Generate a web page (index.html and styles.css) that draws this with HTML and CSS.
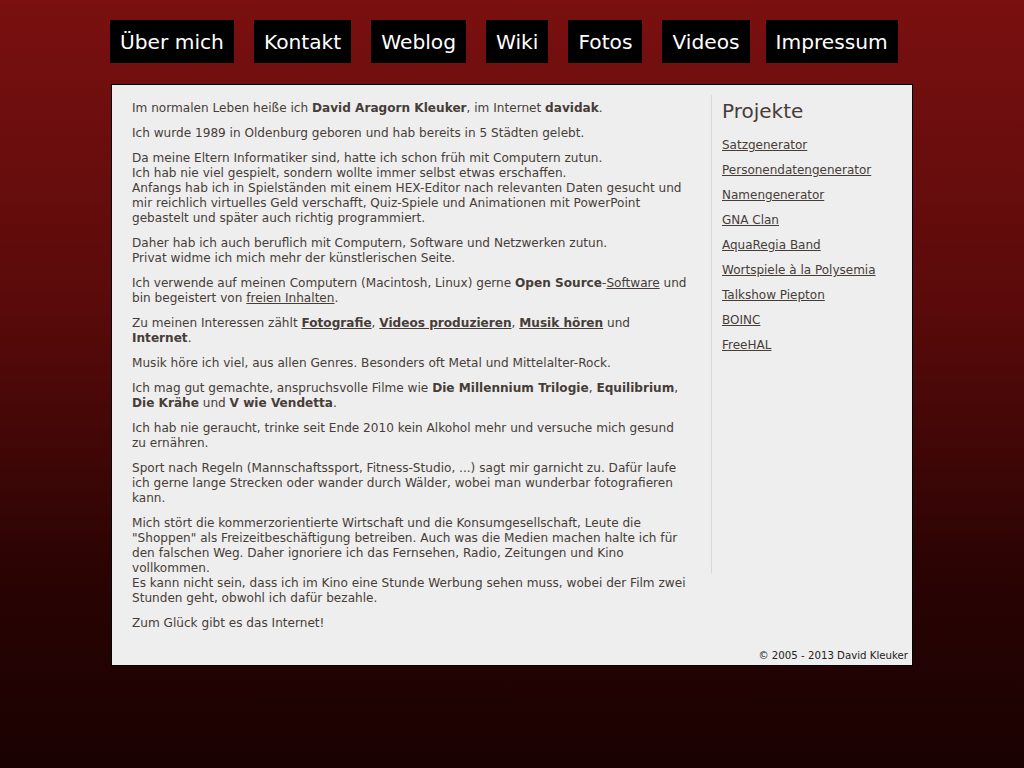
FILE: index.html
```html
<!DOCTYPE html>
<html lang="de">
<head>
<meta charset="utf-8">
<title>David Kleuker</title>
<link rel="stylesheet" href="styles.css">
</head>
<body>
<nav class="nav">
  <a class="nav-item" href="#">Über mich</a>
  <a class="nav-item" href="#">Kontakt</a>
  <a class="nav-item" href="#">Weblog</a>
  <a class="nav-item" href="#">Wiki</a>
  <a class="nav-item" href="#">Fotos</a>
  <a class="nav-item" href="#">Videos</a>
  <a class="nav-item nav-last" href="#">Impressum</a>
</nav>
<div class="page">
  <div class="columns">
    <main class="content">
      <p>Im normalen Leben heiße ich <b>David Aragorn Kleuker</b>, im Internet <b>davidak</b>.</p>
      <p>Ich wurde 1989 in Oldenburg geboren und hab bereits in 5 Städten gelebt.</p>
      <p>Da meine Eltern Informatiker sind, hatte ich schon früh mit Computern zutun.<br>Ich hab nie viel gespielt, sondern wollte immer selbst etwas erschaffen.<br>Anfangs hab ich in Spielständen mit einem HEX-Editor nach relevanten Daten gesucht und mir reichlich virtuelles Geld verschafft, Quiz-Spiele und Animationen mit PowerPoint gebastelt und später auch richtig programmiert.</p>
      <p>Daher hab ich auch beruflich mit Computern, Software und Netzwerken zutun.<br>Privat widme ich mich mehr der künstlerischen Seite.</p>
      <p>Ich verwende auf meinen Computern (Macintosh, Linux) gerne <b>Open Source</b>-<a href="#">Software</a> und bin begeistert von <a href="#">freien Inhalten</a>.</p>
      <p>Zu meinen Interessen zählt <a href="#"><b>Fotografie</b></a>, <a href="#"><b>Videos produzieren</b></a>, <a href="#"><b>Musik hören</b></a> und <b>Internet</b>.</p>
      <p>Musik höre ich viel, aus allen Genres. Besonders oft Metal und Mittelalter-Rock.</p>
      <p>Ich mag gut gemachte, anspruchsvolle Filme wie <b>Die Millennium Trilogie</b>, <b>Equilibrium</b>, <b>Die Krähe</b> und <b>V wie Vendetta</b>.</p>
      <p>Ich hab nie geraucht, trinke seit Ende 2010 kein Alkohol mehr und versuche mich gesund zu ernähren.</p>
      <p>Sport nach Regeln (Mannschaftssport, Fitness-Studio, ...) sagt mir garnicht zu. Dafür laufe ich gerne lange Strecken oder wander durch Wälder, wobei man wunderbar fotografieren kann.</p>
      <p>Mich stört die kommerzorientierte Wirtschaft und die Konsumgesellschaft, Leute die "Shoppen" als Freizeitbeschäftigung betreiben. Auch was die Medien machen halte ich für den falschen Weg. Daher ignoriere ich das Fernsehen, Radio, Zeitungen und Kino vollkommen.<br>Es kann nicht sein, dass ich im Kino eine Stunde Werbung sehen muss, wobei der Film zwei Stunden geht, obwohl ich dafür bezahle.</p>
      <p>Zum Glück gibt es das Internet!</p>
    </main>
    <aside class="sidebar">
      <h2 class="sidebar-title">Projekte</h2>
      <ul class="links">
        <li><a href="#">Satzgenerator</a></li>
        <li><a href="#">Personendatengenerator</a></li>
        <li><a href="#">Namengenerator</a></li>
        <li><a href="#">GNA Clan</a></li>
        <li><a href="#">AquaRegia Band</a></li>
        <li><a href="#">Wortspiele à la Polysemia</a></li>
        <li><a href="#">Talkshow Piepton</a></li>
        <li><a href="#">BOINC</a></li>
        <li><a href="#">FreeHAL</a></li>
      </ul>
    </aside>
  </div>
  <footer class="footer">© 2005 - 2013 David Kleuker</footer>
</div>
</body>
</html>
```

FILE: styles.css
```css
html {
  min-height: 100%;
  background: linear-gradient(to bottom, #7a1010 0%, #5a0a0a 40%, #2a0303 75%, #1a0202 100%);
}
body {
  margin: 0;
  font-family: "DejaVu Sans", Verdana, sans-serif;
  color: #473d38;
}
.nav {
  display: flex;
  gap: 20px;
  padding: 20px 0 0 110px;
  height: 43px;
}
.nav-item {
  display: flex;
  align-items: center;
  height: 43px;
  padding: 1px 10px 0;
  box-sizing: border-box;
  background: #000;
  color: #fff;
  text-decoration: none;
  font-size: 20.2px;
}
.nav-last {
  margin-left: -4px;
}
.page {
  width: 800px;
  margin: 21px 0 0 111px;
  border: 1px solid #000;
  background: #eeeeee;
}
.columns {
  display: flex;
  padding-top: 10px;
}
.content {
  width: 559px;
  padding: 6px 0 0 20px;
  font-size: 12.1px;
  line-height: 15px;
}
.content p {
  margin: 0 0 10px;
}
.content b {
  font-weight: bold;
}
a {
  color: #473d38;
}
.sidebar {
  margin-left: 20px;
  border-left: 1px solid #d8d8d8;
  padding: 0 0 0 10px;
  flex: 1;
  height: 478px;
}
.sidebar-title {
  margin: 4px 0 0;
  font-weight: normal;
  font-size: 20px;
  line-height: 24px;
}
.links {
  list-style: none;
  margin: 15px 0 0;
  padding: 0;
  font-size: 12px;
  line-height: 15px;
}
.links li {
  margin-bottom: 10px;
}
.footer {
  text-align: right;
  font-size: 10.2px;
  color: #222;
  padding: 9px 4px 4px 0;
}
```
